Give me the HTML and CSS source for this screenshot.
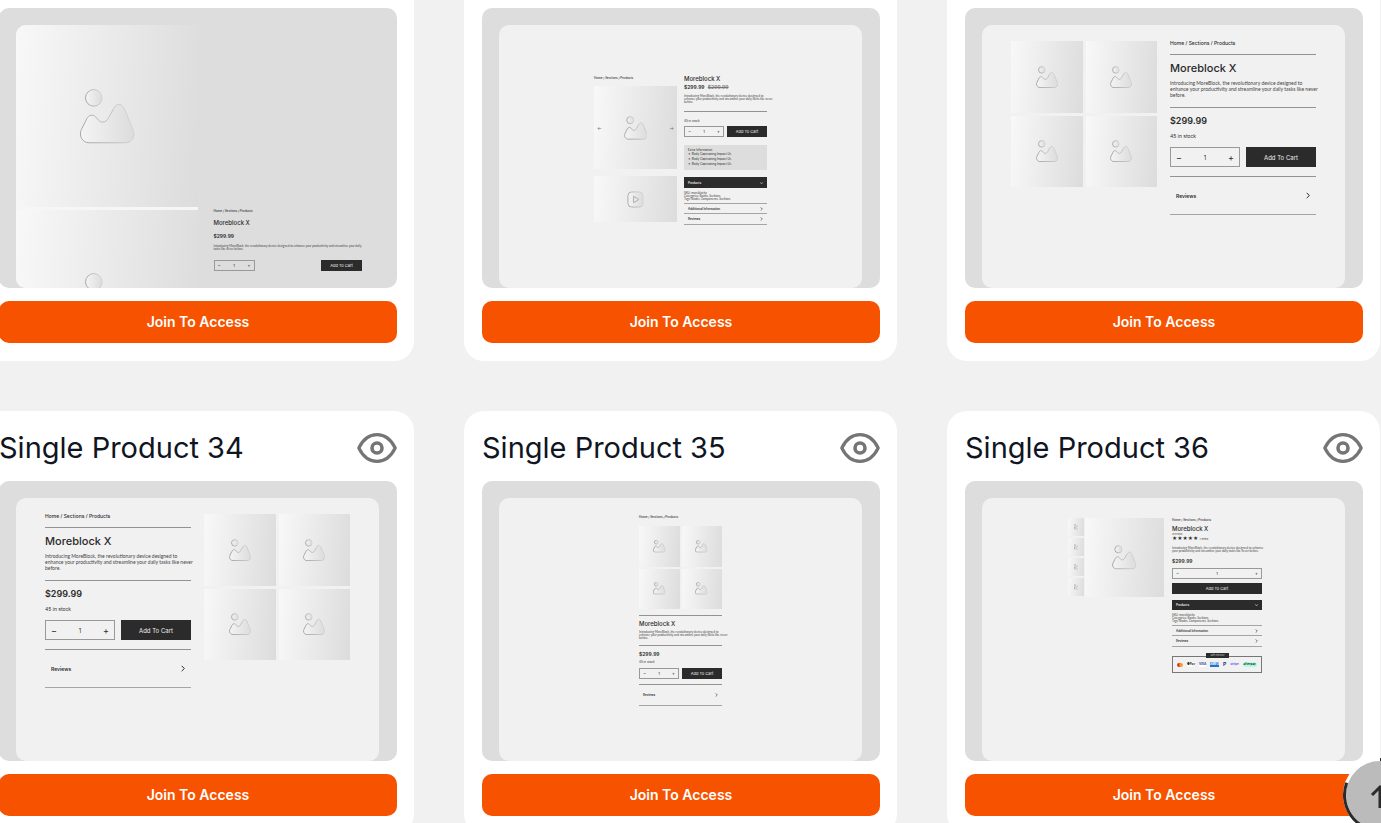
FILE: index.html
```html
<!DOCTYPE html>
<html lang="en">
<head>
    <meta charset="UTF-8">
    <meta name="viewport" content="width=device-width, initial-scale=1.0">
    <title>Single Product Sections</title>
    <link rel="stylesheet" href="styles.css">
</head>
<body>
    <!-- Shared icons -->
    <svg class="sprite" aria-hidden="true">
        <defs>
            <linearGradient id="icon-fill" x1="0" y1="0" x2="1" y2="0">
                <stop offset="0" stop-color="#f4f4f4"/>
                <stop offset="1" stop-color="#dcdcdc"/>
            </linearGradient>
            <linearGradient id="icon-line" x1="0" y1="0.4" x2="1" y2="0.2">
                <stop offset="0" stop-color="#a8a8a8"/>
                <stop offset="1" stop-color="#d6d6d6"/>
            </linearGradient>
        </defs>
        <symbol id="picture" viewBox="-1 -1 57 57">
            <g fill="url(#icon-fill)" stroke="url(#icon-line)">
                <circle cx="14" cy="9" r="8.4" vector-effect="non-scaling-stroke"/>
                <path vector-effect="non-scaling-stroke" d="M9.5 54.5C2 54.5-1.500 47 1.500 41L7 30C9 26 13 25.500 15.500 28C19 32 20 33.500 23 33.500C26 33.500 27 32 29 29L34 20C37 14 42 14 45 20L54 42C56 48 53 54.500 45.500 54.500Z"/>
            </g>
        </symbol>
        <symbol id="eye" viewBox="0 0 40 30">
            <path fill="none" stroke="#757575" stroke-width="3.2" stroke-linejoin="round" d="M1.800 15C6 6.500 12.500 1.700 20 1.700S34 6.500 38.200 15C34 23.500 27.500 28.300 20 28.300S6 23.500 1.800 15Z"/>
            <circle cx="20" cy="15" r="5" fill="none" stroke="#757575" stroke-width="3.6"/>
        </symbol>
        <symbol id="chevron" viewBox="0 0 6 10">
            <path fill="none" stroke="currentColor" stroke-width="1.5" d="M1 1L5 5L1 9"/>
        </symbol>
    </svg>

    <main class="sections">
        <article class="card card-top">
            <div class="preview">
                <div class="screen screen-split">
                    <div class="stack">
                        <div class="tile"><svg><use href="#picture"/></svg></div>
                        <div class="tile"><svg><use href="#picture"/></svg></div>
                    </div>
                    <div class="info mini">
                        <p class="crumb">Home / Sections / Products</p>
                        <h3>Moreblock X</h3>
                        <p class="price">$299.99</p>
                        <p class="text">Introducing MoreBlock, the revolutionary device designed to enhance your productivity and streamline your daily<br>tasks like never before.</p>
                        <div class="buy">
                            <div class="qty"><button>−</button><span>1</span><button>+</button></div>
                            <button class="cart">Add To Cart</button>
                        </div>
                    </div>
                </div>
            </div>
            <button class="join">Join To Access</button>
        </article>

        <article class="card card-top">
            <div class="preview">
                <div class="screen screen-video">
                    <div class="media mini">
                        <p class="crumb">Home / Sections / Products</p>
                        <div class="tile tile-slider"><span>←</span><svg><use href="#picture"/></svg><span>→</span></div>
                        <div class="tile tile-video">
                            <svg viewBox="0 0 18 18"><rect x="1" y="1" width="16" height="16" rx="4" fill="url(#icon-fill)" stroke="url(#icon-line)"/><path d="M7 5.500L12.500 9L7 12.500Z" fill="none" stroke="#aaa"/></svg>
                        </div>
                    </div>
                    <div class="info mini">
                        <h3>Moreblock X</h3>
                        <p class="price">$299.99 <s>$299.99</s></p>
                        <p class="text">Introducing MoreBlock, the revolutionary device designed to<br>enhance your productivity and streamline your daily tasks like never<br>before.</p>
                        <hr>
                        <p class="stock">45 in stock</p>
                        <div class="buy">
                            <div class="qty"><button>−</button><span>1</span><button>+</button></div>
                            <button class="cart">Add To Cart</button>
                        </div>
                        <div class="notes">
                            <p>Extra Information</p>
                            <ul>
                                <li>Body Captivating Impact Ut.</li>
                                <li>Body Captivating Impact Ut.</li>
                                <li>Body Captivating Impact Ut.</li>
                            </ul>
                        </div>
                        <button class="bar">Products <svg class="down"><use href="#chevron"/></svg></button>
                        <p class="meta">SKU: moreblockx<br>Categories: Books, Sections<br>Tags: Books, Components, Sections</p>
                        <button class="row">Additional Information <svg><use href="#chevron"/></svg></button>
                        <button class="row">Reviews <svg><use href="#chevron"/></svg></button>
                    </div>
                </div>
            </div>
            <button class="join">Join To Access</button>
        </article>

        <article class="card card-top">
            <div class="preview">
                <div class="screen screen-halves">
                    <div class="gallery">
                        <div class="tile"><svg><use href="#picture"/></svg></div>
                        <div class="tile"><svg><use href="#picture"/></svg></div>
                        <div class="tile"><svg><use href="#picture"/></svg></div>
                        <div class="tile"><svg><use href="#picture"/></svg></div>
                    </div>
                    <div class="info">
                        <p class="crumb">Home / Sections / Products</p>
                        <hr>
                        <h3>Moreblock X</h3>
                        <p class="text">Introducing MoreBlock, the revolutionary device designed to<br>enhance your productivity and streamline your daily tasks like never<br>before.</p>
                        <hr>
                        <p class="price">$299.99</p>
                        <p class="stock">45 in stock</p>
                        <div class="buy">
                            <div class="qty"><button>−</button><span>1</span><button>+</button></div>
                            <button class="cart">Add To Cart</button>
                        </div>
                        <hr>
                        <button class="row">Reviews <svg><use href="#chevron"/></svg></button>
                    </div>
                </div>
            </div>
            <button class="join">Join To Access</button>
        </article>

        <article class="card">
            <header class="card-head">
                <h2>Single Product 34</h2>
                <a href="#" aria-label="Preview"><svg class="eye"><use href="#eye"/></svg></a>
            </header>
            <div class="preview">
                <div class="screen screen-halves">
                    <div class="info">
                        <p class="crumb">Home / Sections / Products</p>
                        <hr>
                        <h3>Moreblock X</h3>
                        <p class="text">Introducing MoreBlock, the revolutionary device designed to<br>enhance your productivity and streamline your daily tasks like never<br>before.</p>
                        <hr>
                        <p class="price">$299.99</p>
                        <p class="stock">45 in stock</p>
                        <div class="buy">
                            <div class="qty"><button>−</button><span>1</span><button>+</button></div>
                            <button class="cart">Add To Cart</button>
                        </div>
                        <hr>
                        <button class="row">Reviews <svg><use href="#chevron"/></svg></button>
                    </div>
                    <div class="gallery">
                        <div class="tile"><svg><use href="#picture"/></svg></div>
                        <div class="tile"><svg><use href="#picture"/></svg></div>
                        <div class="tile"><svg><use href="#picture"/></svg></div>
                        <div class="tile"><svg><use href="#picture"/></svg></div>
                    </div>
                </div>
            </div>
            <button class="join">Join To Access</button>
        </article>

        <article class="card">
            <header class="card-head">
                <h2>Single Product 35</h2>
                <a href="#" aria-label="Preview"><svg class="eye"><use href="#eye"/></svg></a>
            </header>
            <div class="preview">
                <div class="screen screen-column">
                    <div class="info mini">
                        <p class="crumb">Home / Sections / Products</p>
                        <div class="gallery">
                            <div class="tile"><svg><use href="#picture"/></svg></div>
                            <div class="tile"><svg><use href="#picture"/></svg></div>
                            <div class="tile"><svg><use href="#picture"/></svg></div>
                            <div class="tile"><svg><use href="#picture"/></svg></div>
                        </div>
                        <hr>
                        <h3>Moreblock X</h3>
                        <p class="text">Introducing MoreBlock, the revolutionary device designed to<br>enhance your productivity and streamline your daily tasks like never<br>before.</p>
                        <hr>
                        <p class="price">$299.99</p>
                        <p class="stock">45 in stock</p>
                        <div class="buy">
                            <div class="qty"><button>−</button><span>1</span><button>+</button></div>
                            <button class="cart">Add To Cart</button>
                        </div>
                        <hr>
                        <button class="row">Reviews <svg><use href="#chevron"/></svg></button>
                    </div>
                </div>
            </div>
            <button class="join">Join To Access</button>
        </article>

        <article class="card">
            <header class="card-head">
                <h2>Single Product 36</h2>
                <a href="#" aria-label="Preview"><svg class="eye"><use href="#eye"/></svg></a>
            </header>
            <div class="preview">
                <div class="screen screen-thumbs">
                    <div class="thumbs">
                        <div class="tile"><svg><use href="#picture"/></svg></div>
                        <div class="tile"><svg><use href="#picture"/></svg></div>
                        <div class="tile"><svg><use href="#picture"/></svg></div>
                        <div class="tile"><svg><use href="#picture"/></svg></div>
                    </div>
                    <div class="tile tile-main"><svg><use href="#picture"/></svg></div>
                    <div class="info mini">
                        <p class="crumb">Home / Sections / Products</p>
                        <h3>Moreblock X</h3>
                        <p class="stock">45 in stock</p>
                        <p class="stars">★★★★★ <span>(1 review)</span></p>
                        <p class="text">Introducing MoreBlock, the revolutionary device designed to enhance<br>your productivity and streamline your daily tasks like never before.</p>
                        <p class="price">$299.99</p>
                        <div class="qty"><button>−</button><span>1</span><button>+</button></div>
                        <button class="cart">Add To Cart</button>
                        <button class="bar">Products <svg class="down"><use href="#chevron"/></svg></button>
                        <p class="meta">SKU: moreblockx<br>Categories: Books, Sections<br>Tags: Books, Components, Sections</p>
                        <button class="row">Additional Information <svg><use href="#chevron"/></svg></button>
                        <button class="row">Reviews <svg><use href="#chevron"/></svg></button>
                        <div class="pay">
                            <span class="pay-label">Safe Checkout</span>
                            <svg class="mastercard" viewBox="0 0 6 4"><circle cx="2" cy="2" r="1.900" fill="#d9261c"/><circle cx="4" cy="2" r="1.900" fill="#f59a23"/></svg>
                            <span class="gpay">●Pay</span>
                            <span class="visa">VISA</span>
                            <span class="amex">AMEX</span>
                            <span class="paypal">P</span>
                            <span class="stripe">stripe</span>
                            <span class="afterpay">afterpay</span>
                        </div>
                    </div>
                </div>
            </div>
            <button class="join">Join To Access</button>
        </article>
    </main>

    <button class="to-top" aria-label="Back to top">
        <svg viewBox="0 0 74 74">
            <circle cx="37" cy="37" r="35.500" fill="#bbb" stroke="#fff" stroke-width="3"/>
            <path d="M3.700 24.700A35.500 35.500 0 0 0 37 72.500A35.500 35.500 0 0 0 37 1.500" fill="none" stroke="#2b2b2b" stroke-width="3"/>
            <path d="M37 50V29M29 37L37 29L45 37" fill="none" stroke="#2b2b2b" stroke-width="3"/>
        </svg>
    </button>
</body>
</html>
```
FILE: styles.css
```css
* {
    box-sizing: border-box;
}

body {
    margin: 0;
    background: #f1f1f1;
    color: #2b2b2b;
    font-family: Inter, "Liberation Sans", sans-serif;
    overflow: hidden;
}

h2, h3, p, ul {
    margin: 0;
    padding: 0;
    font-weight: 400;
}

button {
    padding: 0;
    border: 0;
    background: none;
    color: inherit;
    font: inherit;
    cursor: pointer;
}

.sprite {
    position: absolute;
    width: 0;
    height: 0;
}

/* Grid of section cards */
.sections {
    display: grid;
    grid-template-columns: repeat(3, minmax(0, 1fr));
    gap: 50px;
    margin: 0 1px 0 -19px;
}

.card {
    padding: 18px 17px 18px 18px;
    background: #fff;
    border-radius: 20px;
}

.card-top {
    padding-top: 8px;
    border-radius: 0 0 20px 20px;
}

.card-head {
    display: flex;
    align-items: center;
    justify-content: space-between;
    height: 38px;
    margin-bottom: 14px;
}

.card-head h2 {
    color: #0f1523;
    font-size: 29px;
    line-height: 38px;
    white-space: nowrap;
}

.eye {
    display: block;
    width: 40px;
    height: 30px;
}

.join {
    display: block;
    width: 100%;
    height: 42px;
    border-radius: 10px;
    background: #f65200;
    color: #fff;
    font-size: 14px;
    font-weight: 600;
    line-height: 20px;
}

/* Section previews */
.preview {
    margin-bottom: 13px;
    padding: 17px 18px 0 17px;
    background: #ddd;
    border-radius: 10px;
}

.screen {
    display: flex;
    height: 263px;
    border-radius: 10px;
    background: #f1f1f1;
    overflow: hidden;
}

.tile {
    display: flex;
    align-items: center;
    justify-content: center;
    aspect-ratio: 1;
    background: linear-gradient(95deg, #f8f8f8, #dcdcdc);
}

.tile svg {
    width: 31%;
    height: 31%;
}

.gallery {
    display: grid;
    grid-template-columns: 1fr 1fr;
    gap: 3px;
    align-self: flex-start;
}

.info hr {
    height: 1px;
    margin: 0;
    border: 0;
    background: #939393;
}

.info p, .info h3, .media p {
    white-space: nowrap;
}

.crumb {
    font-size: 5px;
    font-weight: 500;
    line-height: 5px;
}

.info h3 {
    font-size: 11px;
    font-weight: 500;
    line-height: 14px;
}

.text, .meta {
    color: #444;
    font-family: Lato, "Liberation Sans", sans-serif;
}

.text {
    font-size: 5px;
    line-height: 6px;
}

.price {
    font-size: 9px;
    font-weight: 600;
    line-height: 12px;
}

.price s {
    margin-left: 2px;
    color: #777;
}

.stock {
    font-size: 5px;
    line-height: 6px;
}

.buy {
    display: grid;
    grid-template-columns: 1fr 1fr;
    gap: 6px;
}

.qty {
    display: flex;
    align-items: center;
    justify-content: space-between;
    height: 20px;
    padding: 0 5px;
    border: 1px solid #999;
    font-size: 6px;
}

.qty button {
    font-size: 9px;
    line-height: 9px;
}

.cart {
    height: 20px;
    background: #2b2b2b;
    color: #eee;
    font-size: 6px;
}

.row, .bar {
    display: flex;
    align-items: center;
    justify-content: space-between;
    width: 100%;
    padding: 0 6px;
    font-size: 5px;
    font-weight: 600;
}

.row {
    height: 38px;
    border-bottom: 1px solid #a5a5a5;
}

.row svg, .bar svg {
    width: 4px;
    height: 7px;
}

/* Two equal halves */
.screen-halves {
    gap: 13px;
    padding: 16px 29px 0;
}

.screen-halves > * {
    flex: 1;
    min-width: 0;
}

.screen-halves .crumb { margin-bottom: 8px; }
.screen-halves h3 { margin-top: 6px; }
.screen-halves .text { margin: 5px 0 9px; }
.screen-halves .price { margin-top: 7px; }
.screen-halves .stock { margin: 6px 0 8px; }
.screen-halves .buy { margin-bottom: 9px; }

/* Smaller scale for the dense layouts */
.mini .crumb {
    font-size: 3px;
    line-height: 4px;
}

.mini h3 {
    font-size: 6px;
    line-height: 8px;
}

.mini .price {
    font-size: 5px;
    line-height: 8px;
}

.mini .text, .mini .meta {
    font-size: 3px;
    line-height: 3px;
}

.mini .stock {
    font-size: 3px;
    line-height: 4px;
}

.mini .buy {
    gap: 3px;
}

.mini .qty, .mini .cart {
    height: 11px;
    font-size: 4px;
    line-height: 9px;
}

.mini .qty {
    padding: 0 3px;
}

.mini .qty button {
    font-size: 5px;
    line-height: 5px;
}

.mini .row, .mini .bar {
    height: 11px;
    padding: 0 4px;
    font-size: 3px;
}

.mini .bar {
    background: #2b2b2b;
    color: #eee;
}

.mini .row svg, .mini .bar svg {
    width: 3px;
    height: 4px;
}

.down {
    transform: rotate(90deg);
}

.mini .meta {
    margin: 4px 0 3px;
}

/* 31: large pictures with the details at the bottom */
.screen-split {
    gap: 16px;
    background: #ddd;
}

.stack {
    flex: none;
    display: grid;
    align-content: start;
    gap: 3px;
    width: 50%;
    background: #f6f6f6;
}

.screen-split .info {
    flex: 1;
    min-width: 0;
    align-self: flex-end;
    margin: 0 17px 17px 0;
}

.screen-split .crumb { margin-bottom: 6px; }
.screen-split .price { margin: 5px 0; }
.screen-split .text { margin-bottom: 9px; }

.screen-split .buy {
    grid-template-columns: 41px 41px;
    justify-content: space-between;
}

/* 32: slider and video */
.screen-video {
    gap: 7px;
    padding: 50px 95px 0;
}

.screen-video > * {
    flex: 1;
    min-width: 0;
}

.screen-video .media { padding-top: 1px; }
.screen-video .media .crumb { margin-bottom: 6px; }

.tile-slider {
    justify-content: space-between;
    padding: 0 3px;
    font-size: 5px;
    color: #777;
}

.tile-video {
    height: 46px;
    width: 100%;
    margin-top: 7px;
    aspect-ratio: auto;
}

.tile-video svg {
    width: 17px;
    height: 17px;
}

.screen-video .text { margin: 4px 0 7px; }
.screen-video hr + .stock { margin: 7px 0 3px; }

.notes {
    height: 25px;
    margin: 8px 0 7px;
    padding: 3px 4px;
    background: #ddd;
    font-size: 3px;
    line-height: 4px;
}

.notes ul {
    list-style: none;
    line-height: 5px;
}

.notes li::before {
    content: "✦ ";
}

.screen-video .meta { margin-bottom: 2px; }

.screen-video .meta + .row {
    border-top: 1px solid #a5a5a5;
}

/* 35: single column */
.screen-column {
    padding: 17px 140px 0;
}

.screen-column .info { flex: 1; min-width: 0; }
.screen-column .crumb { margin-bottom: 7px; }
.screen-column .gallery { gap: 2px; margin-bottom: 6px; }
.screen-column h3 { margin-top: 4px; }
.screen-column .text { margin: 3px 0 5px; }
.screen-column .price { margin-top: 4px; }
.screen-column .stock { margin: 2px 0 4px; }
.screen-column .buy { margin-bottom: 5px; }
.screen-column .row { height: 21px; }

/* 36: thumbnails beside the picture */
.screen-thumbs {
    align-items: flex-start;
    padding: 20px 83px 0 86px;
}

.thumbs {
    display: grid;
    gap: 2px;
    width: 17px;
}

.thumbs .tile {
    height: 18px;
    width: 16px;
    aspect-ratio: auto;
}

.tile-main {
    width: 79px;
    margin-right: 8px;
}

.screen-thumbs .info {
    flex: 1;
    min-width: 0;
}

.screen-thumbs .crumb { margin-bottom: 3px; }

.screen-thumbs .stock {
    font-size: 2px;
    line-height: 2px;
}

.stars {
    margin: 1px 0 5px;
    font-size: 5px;
    line-height: 5px;
}

.stars span {
    font-size: 2px;
}

.screen-thumbs .price { margin: 4px 0 3px; }

.screen-thumbs .cart {
    display: block;
    width: 100%;
    margin: 4px 0 6px;
}

.screen-thumbs .bar { height: 10px; }
.screen-thumbs .meta { margin-bottom: 2px; }

.screen-thumbs .meta + .row {
    border-top: 1px solid #a5a5a5;
}

.pay {
    position: relative;
    display: flex;
    align-items: center;
    justify-content: space-between;
    height: 17px;
    margin-top: 9px;
    padding: 0 4px;
    border: 1px solid #777;
    font-size: 3px;
    font-weight: 700;
    line-height: 5px;
}

.pay-label {
    position: absolute;
    top: -4px;
    left: 50%;
    width: 23px;
    margin-left: -11px;
    background: #2b2b2b;
    color: #ccc;
    font-size: 2px;
    font-weight: 400;
    text-align: center;
}

.mastercard {
    width: 6px;
    height: 4px;
}

.visa { color: #1a2f8f; background: #fff; }
.gpay { background: #fff; }
.paypal { color: #123a8c; font-size: 5px; }
.stripe { color: #635bff; }

.amex {
    background: #2372ce;
    color: #fff;
}

.afterpay {
    background: #b2fce4;
    border-radius: 2px;
    padding: 0 1px;
}

.to-top {
    position: fixed;
    right: -36px;
    bottom: -9px;
    width: 74px;
    height: 74px;
}

.to-top svg {
    display: block;
}
```
